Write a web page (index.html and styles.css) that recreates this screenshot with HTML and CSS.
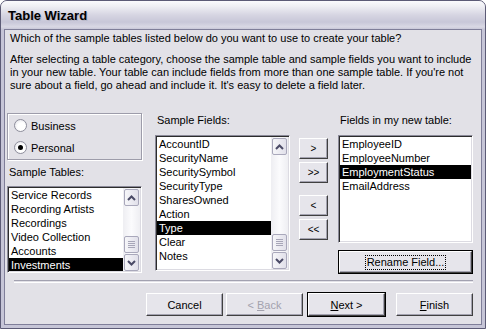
FILE: index.html
```html
<!DOCTYPE html>
<html lang="en">
<head>
    <meta charset="UTF-8">
    <title>Table Wizard</title>

    <link rel="stylesheet" href="styles.css">
</head>
<body>

    <div class="window">
        <div class="titlebar">Table Wizard</div>

        <div class="client">
            <p class="question">Which of the sample tables listed below do you want to use to create your table?</p>
            <p class="desc">After selecting a table category, choose the sample table and sample fields you want to include in your new table. Your table can include fields from more than one sample table. If you're not sure about a field, go ahead and include it. It's easy to delete a field later.</p>

            <div class="main">
                <div class="col col-tables">
                    <div class="groupbox">
                        <div class="radio-row">
                            <span class="radio"></span>
                            <span>Business</span>
                        </div>
                        <div class="radio-row">
                            <span class="radio checked"></span>
                            <span>Personal</span>
                        </div>
                    </div>
                    <div class="label label-tables">Sample Tables:</div>
                    <div class="listbox list-tables">
                        <div class="items">
                            <div class="item">Service Records</div>
                            <div class="item">Recording Artists</div>
                            <div class="item">Recordings</div>
                            <div class="item">Video Collection</div>
                            <div class="item">Accounts</div>
                            <div class="item selected">Investments</div>
                        </div>
                        <div class="scrollbar">
                            <div class="sb-btn">
                                <svg width="9" height="6" viewBox="0 0 9 6"><polyline points="1,5 4.5,1.5 8,5" fill="none" stroke="#4a4a66" stroke-width="2"/></svg>
                            </div>
                            <div class="sb-track"></div>
                            <div class="sb-thumb"><span></span><span></span><span></span><span></span></div>
                            <div class="sb-btn">
                                <svg width="9" height="6" viewBox="0 0 9 6"><polyline points="1,1 4.5,4.5 8,1" fill="none" stroke="#4a4a66" stroke-width="2"/></svg>
                            </div>
                        </div>
                    </div>
                </div>

                <div class="col col-fields">
                    <div class="label">Sample Fields:</div>
                    <div class="listbox list-fields">
                        <div class="items">
                            <div class="item">AccountID</div>
                            <div class="item">SecurityName</div>
                            <div class="item">SecuritySymbol</div>
                            <div class="item">SecurityType</div>
                            <div class="item">SharesOwned</div>
                            <div class="item">Action</div>
                            <div class="item selected">Type</div>
                            <div class="item">Clear</div>
                            <div class="item">Notes</div>
                        </div>
                        <div class="scrollbar">
                            <div class="sb-btn">
                                <svg width="9" height="6" viewBox="0 0 9 6"><polyline points="1,5 4.5,1.5 8,5" fill="none" stroke="#4a4a66" stroke-width="2"/></svg>
                            </div>
                            <div class="sb-track"></div>
                            <div class="sb-thumb"><span></span><span></span><span></span><span></span></div>
                            <div class="sb-btn">
                                <svg width="9" height="6" viewBox="0 0 9 6"><polyline points="1,1 4.5,4.5 8,1" fill="none" stroke="#4a4a66" stroke-width="2"/></svg>
                            </div>
                        </div>
                    </div>
                </div>

                <div class="col col-move">
                    <div class="btn small">&gt;</div>
                    <div class="btn small">&gt;&gt;</div>
                    <div class="btn small spaced">&lt;</div>
                    <div class="btn small">&lt;&lt;</div>
                </div>

                <div class="col col-new">
                    <div class="label">Fields in my new table:</div>
                    <div class="listbox list-new">
                        <div class="items">
                            <div class="item">EmployeeID</div>
                            <div class="item">EmployeeNumber</div>
                            <div class="item selected">EmploymentStatus</div>
                            <div class="item">EmailAddress</div>
                        </div>
                    </div>
                    <div class="btn rename"><span class="focus">Rename Field...</span></div>
                </div>
            </div>

            <div class="separator"></div>

            <div class="footer">
                <div class="btn wide"><span>Cancel</span></div>
                <div class="btn wide disabled"><span>&lt; <u>B</u>ack</span></div>
                <div class="btn wide default"><span><u>N</u>ext &gt;</span></div>
                <div class="btn wide"><span><u>F</u>inish</span></div>
            </div>
        </div>
    </div>

</body>
</html>
```

FILE: styles.css
```css
html, body{
    height: 100%;
}

body{
    margin: 0;
    overflow: hidden;
    background: #ffffff;
    font-family: "Liberation Sans", Arial, sans-serif;
    font-size: 11px;
    color: #000;
}

.window{
    width: 486px;
    height: 329px;
    box-sizing: border-box;
    border: 1px solid #5c5b76;
    border-radius: 7px 7px 0 0;
    background: #c6c5d7;
    display: flex;
    flex-direction: column;
}

.titlebar{
    height: 28px;
    line-height: 29px;
    padding-left: 7px;
    font-size: 13px;
    font-weight: bold;
    color: #000;
    text-shadow: 1px 1px 0 #b8b8c8;
    border-radius: 6px 6px 0 0;
    background: linear-gradient(#fbfbfd 0%, #eeeef3 20%, #d6d5e2 50%, #c8c7d8 75%, #d9d8e4 92%, #c9c8d9 100%);
}

.client{
    flex: 1;
    margin: 0 3px 3px 3px;
    border: 1px solid #7f7e99;
    background: #e2e1e7;
    padding: 2px 0 0 2px;
    display: flex;
    flex-direction: column;
}

p{
    margin: 0 0 0 3px;
    line-height: 13px;
}

.desc{
    margin-top: 8px;
    width: 470px;
}

.main{
    display: flex;
    align-items: flex-start;
    margin-top: 21px;
    height: 159px;
}

.col{
    display: flex;
    flex-direction: column;
}

.col-tables{
    width: 135px;
}

.col-fields{
    width: 135px;
    margin-left: 13px;
}

.col-move{
    width: 29px;
    margin-left: 9px;
    padding-top: 22px;
}

.col-new{
    width: 135px;
    margin-left: 10px;
}

.groupbox{
    height: 45px;
    border: 1px solid #9d9caa;
    box-shadow: inset 1px 1px 0 #ffffff, 1px 1px 0 #ffffff;
    padding: 0 0 0 6px;
}

.radio-row{
    height: 21px;
    display: flex;
    align-items: center;
    margin-top: 1px;
}

.radio{
    width: 11px;
    height: 11px;
    border-radius: 50%;
    border: 1px solid #8e8e9c;
    background: radial-gradient(circle at 60% 60%, #ffffff 40%, #dcdce4 100%);
    margin-right: 4px;
    position: relative;
}

.radio.checked::after{
    content: '';
    position: absolute;
    left: 3px;
    top: 3px;
    width: 5px;
    height: 5px;
    border-radius: 50%;
    background: #000;
}

.label{
    line-height: 13px;
    padding-left: 2px;
    margin-top: 1px;
    margin-bottom: 8px;
}

.label-tables{
    margin-top: 6px;
    margin-bottom: 7px;
}

.listbox{
    box-sizing: border-box;
    background: #ffffff;
    border: 1px solid;
    border-color: #8b8a99 #ffffff #ffffff #8b8a99;
    box-shadow: inset 1px 1px 0 #2c2c2c, inset -1px -1px 0 #dcdbe2;
    padding: 1px;
    display: flex;
    overflow: hidden;
}

.list-tables{
    height: 87px;
}

.list-fields{
    height: 136px;
}

.list-new{
    height: 108px;
    margin-bottom: 7px;
}

.items{
    flex: 1;
    overflow: hidden;
}

.item{
    height: 14px;
    line-height: 14px;
    padding-left: 2px;
    white-space: nowrap;
}

.item.selected{
    background: #000;
    color: #fff;
}

.scrollbar{
    width: 17px;
    display: flex;
    flex-direction: column;
    background: linear-gradient(to right, #eeeef2, #fbfbfd 50%, #eeeef2);
}

.sb-btn, .sb-thumb{
    height: 15px;
    margin: 1px 1px 0 1px;
    border: 1px solid #a9a8bb;
    border-radius: 2px;
    background: linear-gradient(to right, #f6f6f9, #e1e0ea);
    display: flex;
    align-items: center;
    justify-content: center;
}

.sb-track{
    flex: 1;
}

.sb-thumb{
    flex-direction: column;
    gap: 1px;
}

.sb-thumb span{
    width: 7px;
    height: 1px;
    background: #a7a6b8;
}

.btn{
    box-sizing: border-box;
    display: flex;
    align-items: center;
    justify-content: center;
    background: #e6e5eb;
    border: 1px solid;
    border-color: #ffffff #404040 #404040 #ffffff;
    box-shadow: inset -1px -1px 0 #a3a2b0;
    white-space: pre;
}

.btn.small{
    height: 21px;
    margin-top: 3px;
    font-size: 10px;
}

.btn.small.spaced{
    margin-top: 12px;
}

.btn.rename{
    height: 22px;
    outline: 1px solid #000;
    outline-offset: 0;
    margin: 1px 0 0 1px;
    width: 133px;
}

.focus{
    border: 1px dotted #000;
    padding: 0 1px;
    line-height: 13px;
}

.separator{
    height: 1px;
    border-top: 1px solid #a2a1b0;
    border-bottom: 1px solid #ffffff;
    margin: 8px 8px 0 7px;
}

.footer{
    display: flex;
    justify-content: flex-end;
    padding-right: 8px;
    margin-top: 10px;
}

.btn.wide{
    width: 77px;
    height: 23px;
    margin-left: 3px;
}

.btn.disabled{
    color: #a3a2ae;
    margin-left: 3px;
}

.btn.default{
    outline: 1px solid #000;
    margin-left: 5px;
    margin-right: 8px;
}
```
